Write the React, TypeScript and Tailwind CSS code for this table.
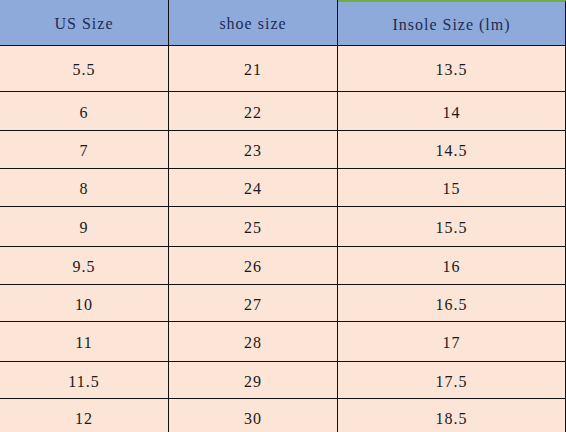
const rows: { us: string; shoe: string; insole: string; h: string }[] = [
  { us: '5.5', shoe: '21', insole: '13.5', h: 'h-[46px]' },
  { us: '6', shoe: '22', insole: '14', h: 'h-[39px]' },
  { us: '7', shoe: '23', insole: '14.5', h: 'h-[38px]' },
  { us: '8', shoe: '24', insole: '15', h: 'h-[38px]' },
  { us: '9', shoe: '25', insole: '15.5', h: 'h-[40px]' },
  { us: '9.5', shoe: '26', insole: '16', h: 'h-[38px]' },
  { us: '10', shoe: '27', insole: '16.5', h: 'h-[37px]' },
  { us: '11', shoe: '28', insole: '17', h: 'h-[40px]' },
  { us: '11.5', shoe: '29', insole: '17.5', h: 'h-[37px]' },
  { us: '12', shoe: '30', insole: '18.5', h: 'h-[37px]' },
];

const cell = 'flex items-center justify-center pt-[3px] border-r border-b border-[#111]';

export default function App() {
  return (
    <div className="w-[566px] h-[432px] overflow-hidden bg-white font-['Liberation_Serif',serif] text-[16px] tracking-[1px]">
      <div className="flex h-[46px] bg-[#8eaadb] text-[#1f2a55]">
        <div className={`${cell} w-[169px]`}>US Size</div>
        <div className={`${cell} w-[169px]`}>shoe size</div>
        <div className={`${cell} w-[228px] border-t-2 border-t-[#70ad47]`}>Insole Size (lm)</div>
      </div>
      {rows.map((r, i) => (
        <div key={i} className={`flex ${r.h} bg-[#fce4d6] text-[#1a1a1a]`}>
          <div className={`${cell} w-[169px]`}>{r.us}</div>
          <div className={`${cell} w-[169px]`}>{r.shoe}</div>
          <div className={`${cell} w-[228px]`}>{r.insole}</div>
        </div>
      ))}
    </div>
  );
}
